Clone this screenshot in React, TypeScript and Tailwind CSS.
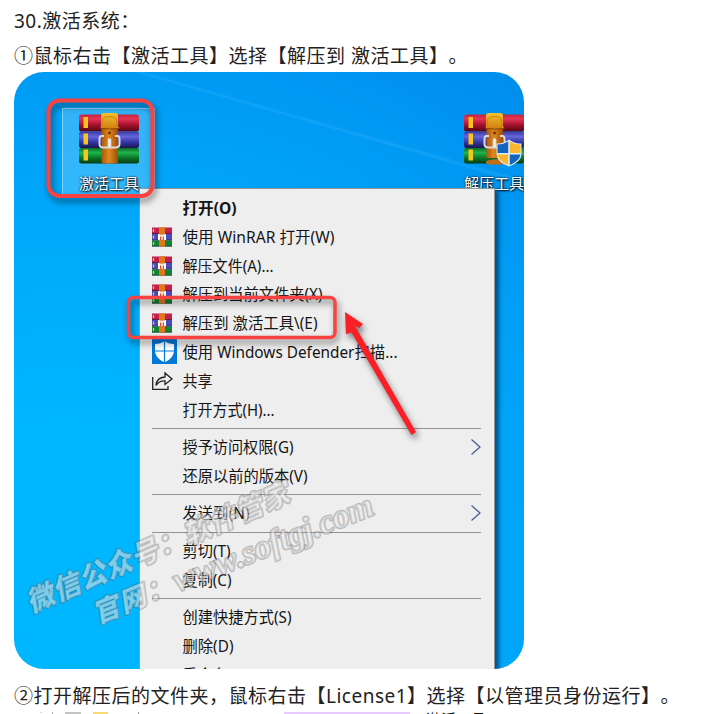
import React from "react";

const bodyText =
  "whitespace-nowrap text-[19px] tracking-[0.5px] leading-[35px] text-[#222] [text-spacing-trim:space-all] [font-family:'Noto_Sans','Noto_Sans_CJK_SC',sans-serif]";
const uiFont = "[font-family:'Noto_Sans','Noto_Sans_CJK_SC',sans-serif]";

function Gradients() {
  return (
    <svg width="0" height="0" className="absolute">
      <defs>
        <linearGradient id="red" x1="0" y1="0" x2="0" y2="1">
          <stop offset="0" stopColor="#c0253f" />
          <stop offset=".25" stopColor="#e63557" />
          <stop offset=".6" stopColor="#a8122f" />
          <stop offset="1" stopColor="#4f0512" />
        </linearGradient>
        <linearGradient id="blue" x1="0" y1="0" x2="0" y2="1">
          <stop offset="0" stopColor="#3a3aa0" />
          <stop offset=".3" stopColor="#6464de" />
          <stop offset=".65" stopColor="#3535a5" />
          <stop offset="1" stopColor="#16164c" />
        </linearGradient>
        <linearGradient id="green" x1="0" y1="0" x2="0" y2="1">
          <stop offset="0" stopColor="#0d6a28" />
          <stop offset=".3" stopColor="#20b54c" />
          <stop offset=".65" stopColor="#0b7428" />
          <stop offset="1" stopColor="#043a10" />
        </linearGradient>
        <linearGradient id="strap" x1="0" y1="0" x2="1" y2="0">
          <stop offset="0" stopColor="#a85808" />
          <stop offset=".45" stopColor="#df8a20" />
          <stop offset="1" stopColor="#a04c06" />
        </linearGradient>
        <linearGradient id="flap" x1="0" y1="0" x2="0" y2="1">
          <stop offset="0" stopColor="#f6c22c" />
          <stop offset="1" stopColor="#cf7d10" />
        </linearGradient>
      </defs>
    </svg>
  );
}

function Archive({ shield = false }: { shield?: boolean }) {
  return (
    <svg width="62" height="56" viewBox="0 0 62 56" className="block overflow-visible">
      <rect x="1" y="2.500" width="60" height="17" rx="2.500" fill="url(#red)" />
      <rect x="1" y="19.500" width="60" height="16.500" rx="2.500" fill="url(#blue)" />
      <rect x="1" y="36" width="60" height="15.500" rx="2.500" fill="url(#green)" />
      <g fill="#f7c51e">
        <rect x="5.500" y="5" width="4.500" height="11" />
        <rect x="5.500" y="21.500" width="4.500" height="11" />
        <rect x="5.500" y="37.500" width="4.500" height="11" />
      </g>
      <rect x="23.500" y="14" width="16.500" height="37.500" fill="url(#strap)" />
      <path d="M23 14V3.500Q23 1 26 1H37Q40 1 40 3.500V14L41.500 16Q32 18 22.500 16Z" fill="url(#flap)" />
      <path d="M24.500 14V8Q25 4.500 31.500 4.500T38.500 8V14" fill="none" stroke="#c98413" strokeWidth="1" />
      <path d="M22.500 16.300Q32 18 41.500 16.300" fill="none" stroke="#8c4604" strokeWidth="1" />
      <circle cx="31.500" cy="21" r="1.400" fill="#6c2c02" />
      <path
        d="M26 24H23.500Q21.500 24 21.500 27V32Q21.500 35.500 25.500 35.500H37.500Q41.500 35.500 41.500 32V27Q41.500 24 39.500 24H37"
        fill="none"
        stroke="#d9d9df"
        strokeWidth="2"
      />
      <path d="M31.500 28V34" stroke="#e8e8ec" strokeWidth="3.500" strokeLinecap="round" />
      {shield && (
        <g>
          <rect x="23" y="46" width="17.500" height="6" fill="#0a6a26" />
          <path d="M23 50Q24 47 40 47V52.500H26Q23 52.500 23 50Z" fill="#c56c14" />
          <path d="M46 27.500Q52 32 58.500 31.500V42Q58.500 50 46 54.500Q33.500 50 33.500 42V31.500Q40 32 46 27.500Z" fill="#d7ecfa" />
          <path d="M45.200 29.500V41H34.500V32.500Q40.500 32.500 45.200 29.500Z" fill="#1464bc" />
          <path d="M46.800 29.500V41H57.500V32.500Q51.500 32.500 46.800 29.500Z" fill="#fbb62d" />
          <path d="M45.200 42.500V53Q35.500 49 34.600 42.500Z" fill="#fbb62d" />
          <path d="M46.800 42.500V53Q56.500 49 57.400 42.500Z" fill="#1464bc" />
        </g>
      )}
    </svg>
  );
}

function SmallArchive() {
  return (
    <svg width="21" height="20" viewBox="0 0 21 20" className="block">
      <rect x="0" y=".5" width="20" height="6.500" fill="#c41f4c" />
      <rect x="0" y="7" width="20" height="6.500" fill="#4a4aba" />
      <rect x="0" y="13.500" width="20" height="6" fill="#108434" />
      <path d="M0 6.500H20M0 13H20M0 19.200H20" stroke="#201c3a" strokeOpacity=".55" />
      <path d="M1.500 2V5M1.500 8.500V11.500M1.500 15V18" stroke="#f5c52a" strokeWidth="1.300" />
      <rect x="7" y=".5" width="6" height="19" fill="#e07818" />
      <path d="M6 7H14V13H6Z" fill="#fff" />
      <path d="M8 13V9.500H9.300V13M10.700 13V9.500H12V13" fill="#d94b20" />
      <path d="M7.500 7H12.500V8.300H7.500Z" fill="#e8a070" />
    </svg>
  );
}

function Defender() {
  return (
    <svg width="25" height="25" viewBox="0 0 25 25" className="block">
      <rect width="25" height="25" fill="#0078d7" />
      <path d="M12.500 2Q16 5 22 5V12Q22 19 12.500 23.500Q3 19 3 12V5Q9 5 12.500 2Z" fill="#fff" />
      <path d="M12.500 2V24M3 12H22" stroke="#0078d7" strokeWidth="1.200" />
    </svg>
  );
}

function Share() {
  return (
    <svg width="22" height="20" viewBox="0 0 22 20" fill="none" stroke="#222" strokeWidth="1.300" className="block">
      <path d="M.7 6V18.300H16V15" />
      <path d="M4 14.500Q4.500 6.500 13 6V2L20 8L13 13.500V9.800Q7 9.500 4 14.500Z" />
    </svg>
  );
}

type Item = { label: string; w: number; icon?: "rar" | "def" | "share"; bold?: boolean; arrow?: boolean };

const groups: Item[][] = [
  [
    { label: "打开(O)", w: 54, bold: true },
    { label: "使用 WinRAR 打开(W)", w: 152, icon: "rar" },
    { label: "解压文件(A)...", w: 91, icon: "rar" },
    { label: "解压到当前文件夹(X)", w: 140, icon: "rar" },
    { label: "解压到 激活工具\\(E)", w: 135, icon: "rar" },
    { label: "使用 Windows Defender扫描...", w: 215, icon: "def" },
    { label: "共享", w: 30, icon: "share" },
    { label: "打开方式(H)...", w: 92 },
  ],
  [
    { label: "授予访问权限(G)", w: 111, arrow: true },
    { label: "还原以前的版本(V)", w: 125 },
  ],
  [{ label: "发送到(N)", w: 67, arrow: true }],
  [
    { label: "剪切(T)", w: 48 },
    { label: "复制(C)", w: 49 },
  ],
  [
    { label: "创建快捷方式(S)", w: 109 },
    { label: "删除(D)", w: 51 },
    { label: "重命名(M)", w: 68 },
  ],
];

function Row({ item }: { item: Item }) {
  return (
    <div className="flex h-[28.800px] items-center">
      <div className="flex w-[42px] shrink-0 justify-start pl-[12px]">
        {item.icon === "rar" && <SmallArchive />}
        {item.icon === "def" && <Defender />}
        {item.icon === "share" && <Share />}
      </div>
      <svg width={item.w + 4} height="28" className="block shrink-0 overflow-visible">
        <text
          x="0.500"
          y="20"
          textLength={item.w}
          lengthAdjust="spacingAndGlyphs"
          fill="#151515"
          className={`text-[15.400px] ${item.bold ? "font-bold" : ""} ${uiFont}`}
        >
          {item.label}
        </text>
      </svg>
      {item.arrow && (
        <svg width="12" height="18" viewBox="0 0 12 18" fill="none" className="mr-[12px] ml-auto block">
          <path d="M1.500 1.500L10 9L1.500 16.500" stroke="#4c5c94" strokeWidth="1.300" />
        </svg>
      )}
    </div>
  );
}

function ContextMenu() {
  return (
    <div className="h-[500px] w-[356px] border border-[#8f9aa0] bg-[#eee] pt-[4.600px] shadow-[4px_3px_4px_rgba(0,30,60,0.6)]">
      {groups.map((g, i) => (
        <div key={i}>
          {i > 0 && (
            <div className="flex h-[8.700px] items-center pr-[13px] pl-[12px]">
              <div className="h-px w-full bg-[#939393]" />
            </div>
          )}
          {g.map((item) => (
            <Row key={item.label} item={item} />
          ))}
        </div>
      ))}
    </div>
  );
}

function Watermark() {
  const cls = "font-black italic [paint-order:stroke] [text-spacing-trim:space-all] [font-family:'Liberation_Serif','Noto_Sans_CJK_SC',serif]";
  return (
    <svg width="510" height="597" className="absolute top-0 left-0">
      <g fill="#eee" fillOpacity=".5" stroke="#555" strokeOpacity=".36" strokeWidth="2.200" strokeLinejoin="round">
        <text transform="translate(17 541) rotate(-23.300)" fontSize="28" textLength="284" className={cls}>
          微信公众号：软件管家
        </text>
        <text transform="translate(83 552) rotate(-22)" fontSize="27" textLength="84" className={cls}>
          官网：
        </text>
        <text transform="translate(164 520) rotate(-21.500)" fontSize="34" textLength="213" className={cls}>
          www.softgj.com
        </text>
      </g>
    </svg>
  );
}

function Desktop() {
  return (
    <div className="relative ml-[14px] h-[597px] w-[510px] overflow-hidden rounded-[30px] bg-[radial-gradient(ellipse_650px_560px_at_50px_500px,#00b7ff_25%,#00a5fa_72%,#008ceb_115%)]">
      <Gradients />
      <svg width="510" height="597" className="absolute top-0 left-0">
        <path d="M130 0L510 108V112L120 0Z" fill="#42baff" fillOpacity=".22" />
      </svg>
      <div className="absolute top-[36px] left-[48px] h-[87px] w-[93px] border border-white/40 bg-white/20" />
      <div className="absolute top-[40px] left-[64px]">
        <Archive />
      </div>
      <div className="absolute top-[40px] left-[449px]">
        <Archive shield />
      </div>
      <div className={`absolute top-[100px] left-[65px] text-[15px] leading-[22px] whitespace-nowrap text-white [text-shadow:1px_1px_2px_#000,0_0_2px_#000] ${uiFont}`}>
        激活工具
      </div>
      <div className={`absolute top-[100px] left-[450px] text-[15px] leading-[22px] whitespace-nowrap text-white [text-shadow:1px_1px_2px_#000,0_0_2px_#000] ${uiFont}`}>
        解压工具
      </div>
      <div className="absolute top-[116px] left-[125px]">
        <ContextMenu />
      </div>
      <Watermark />
      <svg width="510" height="597" className="absolute top-0 left-0 [filter:drop-shadow(2px_4px_3px_rgba(0,0,0,0.5))]">
        <rect x="34.500" y="28.500" width="104" height="95.500" rx="11" fill="none" stroke="#f94343" strokeWidth="4" />
        <rect x="114.500" y="225.500" width="206.500" height="40" rx="5" fill="none" stroke="#f94343" strokeWidth="3.500" />
        <path d="M331 240L349 252L345.500 256L341 254L402 360L397.500 363L336 258L337 261L332 262Z" fill="#f81f26" />
      </svg>
    </div>
  );
}

export default function App() {
  return (
    <div className="h-[714px] w-[719px] overflow-hidden bg-white">
      <div className="h-[72px] pt-[4px] pl-[14px]">
        <p className={bodyText}>30.激活系统：</p>
        <p className={bodyText}>①鼠标右击【激活工具】选择【解压到 激活工具】。</p>
      </div>
      <Desktop />
      <div className="h-[43px] pt-[10px] pl-[14px]">
        <p className={bodyText}>②打开解压后的文件夹，鼠标右击【License1】选择【以管理员身份运行】。</p>
      </div>
      <div className="flex h-[2px] overflow-hidden pl-[40px]">
        <div className="mr-[10px] h-px w-[2px] bg-[#ddd]" />
        <div className="mr-[12px] h-[2px] w-px bg-[#aaa]" />
        <div className="mr-[12px] h-[2px] w-[16px] bg-[#c4c4c4]" />
        <div className="h-[2px] w-[15px] bg-[#fadb73]" />
        <div className="ml-[30px] h-[2px] w-px bg-[#999]" />
        <div className="ml-[145px] h-[2px] w-[126px] bg-[#e8ccff]" />
        <div className={`ml-[16px] text-[15px] leading-[15px] whitespace-nowrap text-[#111] ${uiFont}`}>激活工具</div>
      </div>
    </div>
  );
}
